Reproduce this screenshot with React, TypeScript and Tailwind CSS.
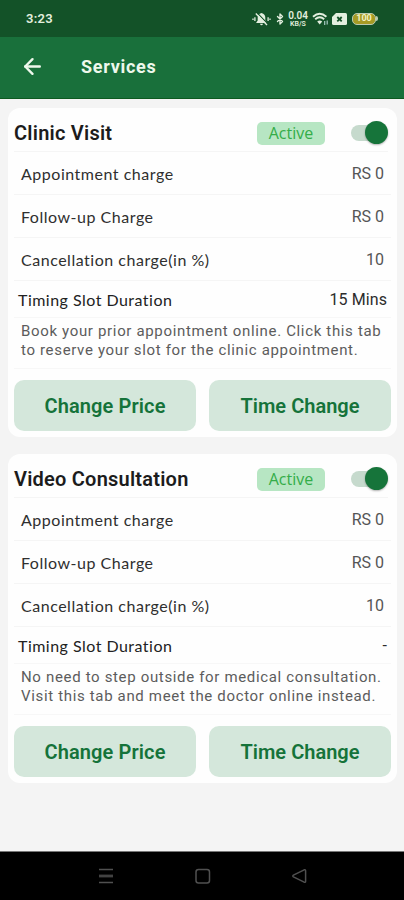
import { ArrowLeft, Bluetooth } from "lucide-react";

type Service = {
  name: string;
  rows: { label: string; value: string }[];
  duration: string;
  description: string[];
};

const services: Service[] = [
  {
    name: "Clinic Visit",
    rows: [
      { label: "Appointment charge", value: "RS 0" },
      { label: "Follow-up Charge", value: "RS 0" },
      { label: "Cancellation charge(in %)", value: "10" },
    ],
    duration: "15 Mins",
    description: [
      "Book your prior appointment online. Click this tab",
      "to reserve your slot for the clinic appointment.",
    ],
  },
  {
    name: "Video Consultation",
    rows: [
      { label: "Appointment charge", value: "RS 0" },
      { label: "Follow-up Charge", value: "RS 0" },
      { label: "Cancellation charge(in %)", value: "10" },
    ],
    duration: "-",
    description: [
      "No need to step outside for medical consultation.",
      "Visit this tab and meet the doctor online instead.",
    ],
  },
];

function StatusBar() {
  return (
    <div className="flex h-[37px] shrink-0 items-center bg-[#135228] pl-[26px] pr-[26px] text-[#e3efdf]">
      <span className="text-[13px] font-semibold tracking-[0.3px]">3:23</span>
      <div className="ml-auto flex items-center">
        {/* muted bell, vibrating */}
        <svg className="mr-[3px]" width="19" height="14" viewBox="0 0 19 14" fill="none">
          <path d="M9.5 1C6.9 1.6 5.7 3.4 5.7 5.8V8.6L4.3 10.4V11H14.7V10.4L13.3 8.6V5.8C13.3 3.4 12.1 1.6 9.5 1ZM8 11.8H11Q10.6 13.3 9.5 13.3Q8.4 13.3 8 11.8Z" fill="#e3efdf" />
          <path d="M5.4 1.2L16.2 12.4" stroke="#135228" strokeWidth="1.2" />
          <path d="M3.8 1.4L15 13" stroke="#e3efdf" strokeWidth="1.4" />
          <path d="M2.9 5.2V9M1 6.4V7.9M16.1 5.2V9M18 6.4V7.9" stroke="#e3efdf" strokeWidth="1.3" />
        </svg>
        <Bluetooth className="mr-[2px] h-[14px] w-[12px]" strokeWidth={2.8} />
        <div className="mr-[4px] flex w-[20px] flex-col items-center font-semibold">
          <span className="h-[9px] text-[10px] leading-[9px] tracking-[-0.1px]">0.04</span>
          <span className="mt-[1px] h-[6px] text-[7px] leading-[6px]">KB/S</span>
        </div>
        <svg className="mr-[3px]" width="17" height="14" viewBox="0 0 17 14" fill="none" stroke="#e3efdf">
          <path d="M1 4.7Q7.7 -1.2 14.4 4.7M3.2 7.3Q7.7 3.4 12.2 7.3" strokeWidth="1.9" />
          <path d="M5.2 9.4Q7.7 7.4 10.2 9.4L7.7 12.4Z" fill="#e3efdf" stroke="none" />
          <path d="M12.7 9V13M15.2 8.5V12.5" strokeWidth="1.2" stroke="#a9cbc4" />
        </svg>
        <svg className="mr-[5px]" width="15" height="12" viewBox="0 0 15 12">
          <path d="M4 0H13.5Q15 0 15 1.5V10.5Q15 12 13.5 12H1.5Q0 12 0 10.5V4Z" fill="#e3efdf" />
          <path d="M5.3 4L9.7 8.4M9.7 4L5.3 8.4" stroke="#135228" strokeWidth="1.8" />
        </svg>
        <div className="flex h-[12px] w-[24px] items-center justify-center rounded-[5px] border border-[#b9cbb0] bg-[#a59b25] text-[9px] font-bold leading-none text-[#f2f3c4]">
          100
        </div>
        <span className="h-[5px] w-[2px] rounded-r-sm bg-[#b9cbb0]" />
      </div>
    </div>
  );
}

function Header() {
  return (
    <header className="flex h-[62px] shrink-0 items-center border-b border-[#0d5a20] bg-[#19703b] pl-[20px] text-[#eef8ec]">
      <ArrowLeft className="-mt-[2px] h-[25px] w-[25px]" strokeWidth={2.3} />
      <h1 className="-mt-[2px] ml-[36px] text-[18px] font-bold tracking-[0.7px]">Services</h1>
    </header>
  );
}

function Toggle() {
  return (
    <div className="relative h-[16px] w-[37px]">
      <div className="h-full w-[32px] rounded-full bg-[#c6dacd]" />
      <div className="absolute -top-[4px] right-0 h-[23px] w-[23px] rounded-full bg-[#16743a] shadow-[0_1px_2px_rgba(0,0,0,0.3)]" />
    </div>
  );
}

function ServiceCard({ service }: { service: Service }) {
  return (
    <section className="flex h-[329px] flex-col rounded-[12px] bg-[#fefefe] px-[6px]">
      <div className="mr-[3px] flex h-[44px] shrink-0 items-center border-b border-[#f5f5f5] pt-[7px]">
        <h2 className="text-[20px] font-semibold leading-none tracking-[0.22px] text-[#1c1c1c]">
          {service.name}
        </h2>
        <span className="ml-auto mr-[26px] flex h-[23px] w-[68px] items-center justify-center rounded-[5px] bg-[#b7e6c3] font-['Open_Sans'] text-[16px] leading-none text-[#34ad49]">
          Active
        </span>
        <Toggle />
      </div>

      {service.rows.map((row) => (
        <div
          key={row.label}
          className="flex h-[43px] shrink-0 items-center justify-between border-b border-[#f5f5f5] pl-[7px] pr-[7px] pt-px"
        >
          <span className="font-['Lato'] text-[16px] tracking-[0.52px] text-[#2f2f2f]">{row.label}</span>
          <span className="text-[16px] text-[#555]">{row.value}</span>
        </div>
      ))}

      <div className="flex h-[37px] shrink-0 items-center justify-between border-b border-[#f7f7f7] pl-[4px] pr-[4px] pt-[2px]">
        <span className="font-['Lato'] text-[16px] tracking-[0.48px] text-[#222]">
          Timing Slot Duration
        </span>
        <span className="text-[16px] tracking-[0.1px] text-[#2c2c2c]">{service.duration}</span>
      </div>

      <div className="h-[51px] shrink-0 border-b border-[#f7f7f7] pl-[7px] pt-[4px]">
        {service.description.map((line) => (
          <p key={line} className="whitespace-nowrap text-[15px] leading-[19px] tracking-[0.66px] text-[#5c5c5c]">
            {line}
          </p>
        ))}
      </div>

      <div className="mt-auto mb-[6px] flex gap-[13px]">
        <button className="h-[51px] w-[182px] rounded-[10px] bg-[#d4e7db] text-[20px] font-semibold tracking-[0.12px] text-[#15733a]">
          Change Price
        </button>
        <button className="h-[51px] w-[182px] rounded-[10px] bg-[#d4e7db] text-[20px] font-semibold tracking-[0.02px] text-[#15733a]">
          Time Change
        </button>
      </div>
    </section>
  );
}

function NavBar() {
  return (
    <nav className="flex h-[49px] shrink-0 items-center border-t border-[#777] bg-black pl-[98px]">
      <svg width="16" height="16" viewBox="0 0 16 16" stroke="#505050" strokeWidth="1.6">
        <path d="M1 1.5H15M1 14.5H15" />
        <path d="M1 8H15" strokeWidth="2.8" stroke="#424242" />
      </svg>
      <svg className="ml-[81px]" width="16" height="16" viewBox="0 0 16 16" fill="none" stroke="#505050" strokeWidth="1.5">
        <rect x="1" y="1.5" width="13.5" height="13.5" rx="2.5" />
      </svg>
      <svg className="ml-[81px]" width="16" height="16" viewBox="0 0 16 16" fill="none" stroke="#505050" strokeWidth="1.5" strokeLinejoin="round">
        <path d="M12.2 1.8Q13.6 1.2 13.6 2.8V13.2Q13.6 14.8 12.2 14.2L1.4 8.8Q0.2 8 1.4 7.2Z" />
      </svg>
    </nav>
  );
}

export default function App() {
  return (
    <div className="flex h-[900px] w-[404px] flex-col overflow-hidden bg-[#f4f4f4] font-['Roboto',sans-serif]">
      <StatusBar />
      <Header />
      <main className="flex flex-1 flex-col gap-[17px] pl-[8px] pr-[7px] pt-[9px]">
        {services.map((service) => (
          <ServiceCard key={service.name} service={service} />
        ))}
      </main>
      <NavBar />
    </div>
  );
}
